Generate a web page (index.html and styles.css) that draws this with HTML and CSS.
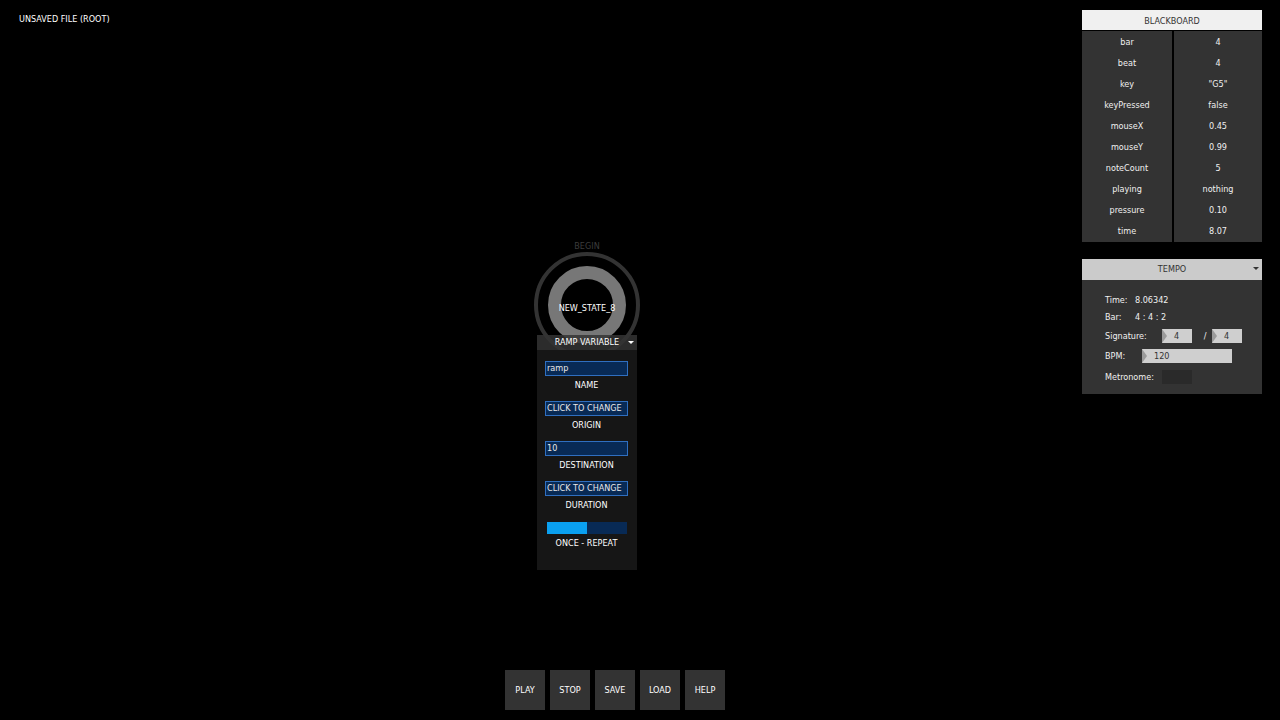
FILE: index.html
```html
<!DOCTYPE html>
<html>
<head>
<meta charset="utf-8">
<title>Editor</title>
<link rel="stylesheet" href="styles.css">
</head>
<body>
<div class="app">
  <div class="main">
    <div class="title">UNSAVED FILE (ROOT)</div>

    <div class="node">
      <div class="node-label">BEGIN</div>
      <div class="node-outer">
        <div class="node-ring"></div>
      </div>
      <div class="node-name">NEW_STATE_8</div>
    </div>

    <div class="ramp">
      <div class="ramp-head">RAMP VARIABLE<span class="caret"></span></div>
      <div class="ramp-body">
        <div class="field"><div class="input">ramp</div><div class="flabel">NAME</div></div>
        <div class="field"><div class="input">CLICK TO CHANGE</div><div class="flabel">ORIGIN</div></div>
        <div class="field"><div class="input">10</div><div class="flabel">DESTINATION</div></div>
        <div class="field"><div class="input">CLICK TO CHANGE</div><div class="flabel">DURATION</div></div>
        <div class="field"><div class="slider"><div class="slider-fill" style="width:50%"></div></div><div class="flabel">ONCE - REPEAT</div></div>
      </div>
    </div>

    <div class="toolbar">
      <div class="btn">PLAY</div>
      <div class="btn">STOP</div>
      <div class="btn">SAVE</div>
      <div class="btn">LOAD</div>
      <div class="btn">HELP</div>
    </div>
  </div>

  <div class="sidebar">
    <div class="blackboard">
      <div class="bb-head">BLACKBOARD</div>
      <div class="bb-row"><div class="bb-cell">bar</div><div class="bb-cell">4</div></div>
      <div class="bb-row"><div class="bb-cell">beat</div><div class="bb-cell">4</div></div>
      <div class="bb-row"><div class="bb-cell">key</div><div class="bb-cell">"G5"</div></div>
      <div class="bb-row"><div class="bb-cell">keyPressed</div><div class="bb-cell">false</div></div>
      <div class="bb-row"><div class="bb-cell">mouseX</div><div class="bb-cell">0.45</div></div>
      <div class="bb-row"><div class="bb-cell">mouseY</div><div class="bb-cell">0.99</div></div>
      <div class="bb-row"><div class="bb-cell">noteCount</div><div class="bb-cell">5</div></div>
      <div class="bb-row"><div class="bb-cell">playing</div><div class="bb-cell">nothing</div></div>
      <div class="bb-row"><div class="bb-cell">pressure</div><div class="bb-cell">0.10</div></div>
      <div class="bb-row"><div class="bb-cell">time</div><div class="bb-cell">8.07</div></div>
    </div>

    <div class="tempo">
      <div class="tempo-head">TEMPO<span class="caret dark"></span></div>
      <div class="tempo-body">
        <div class="trow"><span class="tl">Time:</span><span class="tv">8.06342</span></div>
        <div class="trow"><span class="tl">Bar:</span><span class="tv">4 : 4 : 2</span></div>
        <div class="trow sig"><span class="tl">Signature:</span><span class="box w30">4</span><span class="slash">/</span><span class="box w30">4</span></div>
        <div class="trow bpm"><span class="tl">BPM:</span><span class="box w90">120</span></div>
        <div class="trow met"><span class="tl">Metronome:</span><span class="mbox"></span></div>
      </div>
    </div>
  </div>
</div>
</body>
</html>
```

FILE: styles.css
```css
* { box-sizing: border-box; }
html, body { margin: 0; padding: 0; background: #000; }
body {
  font-family: "DejaVu Sans Condensed", "DejaVu Sans", sans-serif;
  font-size: 9px;
  color: #e8e8e8;
}
.app {
  width: 1280px;
  height: 720px;
  display: flex;
  overflow: hidden;
}
.main {
  flex: 1;
  position: relative;
  display: flex;
  flex-direction: column;
}
.title {
  padding: 14px 0 0 19px;
  color: #fff;
  line-height: 10px;
}

/* node on canvas */
.node {
  position: absolute;
  left: 533px;
  top: 239px;
  width: 108px;
  display: flex;
  flex-direction: column;
  align-items: center;
}
.node-label {
  color: #3c3c3c;
  line-height: 12px;
  height: 13px;
  padding-top: 1px;
}
.node-outer {
  width: 106px;
  height: 106px;
  border-radius: 50%;
  border: 4px solid #333;
  display: flex;
  align-items: center;
  justify-content: center;
}
.node-ring {
  width: 78px;
  height: 78px;
  border-radius: 50%;
  border: 13px solid #777;
}
.node-name {
  position: absolute;
  top: 63px;
  left: 0;
  right: 0;
  text-align: center;
  color: #fff;
  line-height: 12px;
}

/* ramp panel */
.ramp {
  position: absolute;
  left: 537px;
  top: 335px;
  width: 100px;
  height: 235px;
  display: flex;
  flex-direction: column;
}
.ramp-head {
  height: 15px;
  background: rgba(52, 52, 52, 0.85);
  color: #fff;
  text-align: center;
  line-height: 15px;
  position: relative;
}
.caret {
  position: absolute;
  right: 3px;
  top: 6px;
  width: 0;
  height: 0;
  border-left: 3px solid transparent;
  border-right: 3px solid transparent;
  border-top: 3px solid #fff;
}
.caret.dark { border-top-color: #333; top: 8px; right: 3px; }
.ramp-body {
  flex: 1;
  background: #161616;
  padding: 11px 9px 0 8px;
  display: flex;
  flex-direction: column;
  gap: 11px;
}
.field {
  display: flex;
  flex-direction: column;
  align-items: stretch;
}
.input {
  height: 15px;
  border: 1px solid #2f6fc0;
  background: #082a55;
  color: #e8e8e8;
  line-height: 13px;
  padding-left: 1px;
  white-space: nowrap;
  overflow: hidden;
}
.flabel {
  text-align: center;
  color: #fff;
  line-height: 10px;
  margin-top: 4px;
}
.slider {
  height: 12px;
  margin: 1px 1px 0 2px;
  background: #082a55;
}
.slider-fill {
  height: 100%;
  background: #0aa0f0;
}

.toolbar {
  margin-top: auto;
  display: flex;
  gap: 5px;
  padding: 0 0 10px 505px;
}
.btn {
  width: 40px;
  height: 40px;
  background: #333;
  color: #fff;
  display: flex;
  align-items: center;
  justify-content: center;
}

/* sidebar */
.sidebar {
  width: 180px;
  margin: 10px 18px 0 0;
  display: flex;
  flex-direction: column;
  gap: 19px;
}
.blackboard {
  display: flex;
  flex-direction: column;
  gap: 1px;
}
.bb-head {
  height: 20px;
  background: #f0f0f0;
  color: #333;
  text-align: center;
  line-height: 22px;
}
.bb-row {
  height: 20px;
  display: grid;
  grid-template-columns: 90px 88px;
  column-gap: 2px;
}
.bb-cell {
  background: #333;
  color: #f0f0f0;
  text-align: center;
  line-height: 22px;
}

.tempo-head {
  height: 21px;
  background: #cbcbcb;
  color: #333;
  text-align: center;
  line-height: 21px;
  position: relative;
}
.tempo-body {
  height: 114px;
  background: #333;
  padding: 11px 0 0 23px;
  display: flex;
  flex-direction: column;
}
.trow {
  display: flex;
  align-items: center;
  height: 17px;
  color: #f0f0f0;
}
.trow .tl { width: 30px; }
.trow.sig { height: 20px; margin-top: 1px; }
.trow.sig .tl { width: 57px; }
.trow.bpm { height: 20px; }
.trow.bpm .tl { width: 37px; }
.trow.met { height: 21px; }
.trow.met .tl { width: 57px; }
.box {
  height: 14px;
  background: #cfcfcf;
  color: #333;
  position: relative;
  padding-left: 12px;
  line-height: 14px;
}
.box::before {
  content: "";
  position: absolute;
  left: 0;
  top: 0;
  border-top: 7px solid transparent;
  border-bottom: 7px solid transparent;
  border-left: 5px solid #9a9a9a;
}
.w30 { width: 30px; }
.w90 { width: 90px; }
.slash { width: 20px; text-align: center; padding-left: 6px; }
.mbox {
  width: 30px;
  height: 14px;
  background: #2a2a2a;
}
```
